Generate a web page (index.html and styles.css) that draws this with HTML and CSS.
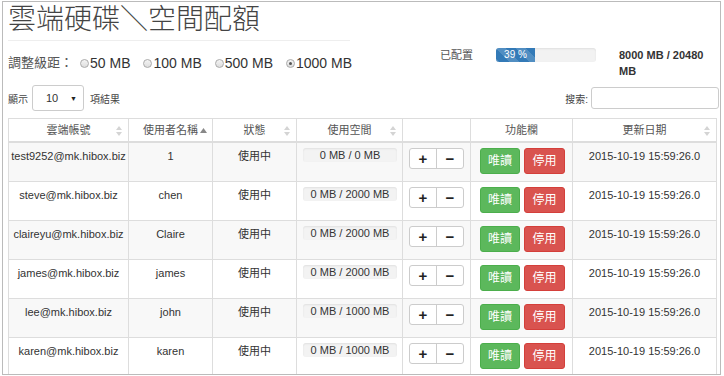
FILE: index.html
```html
<!DOCTYPE html>
<html>
<head>
    <meta charset="utf-8">
    <link rel="stylesheet" href="styles.css">
</head>
<body>
    <div class="frame">
        <div class="top">
            <div class="left">
                <h1 class="ptitle">雲端硬碟＼空間配額</h1>
                <div class="levels">
                    <span class="lbl">調整級距：</span>
                    <span class="opt"><span class="radio"></span>50 MB</span>
                    <span class="opt"><span class="radio"></span>100 MB</span>
                    <span class="opt"><span class="radio"></span>500 MB</span>
                    <span class="opt"><span class="radio checked"></span>1000 MB</span>
                </div>
            </div>
            <div class="quota">
                <span class="qlabel">已配置</span>
                <div class="qbar"><div class="qfill" style="width: 39%">39 %</div></div>
                <div class="qtext">8000 MB / 20480 MB</div>
            </div>
        </div>

        <div class="tools">
            <div class="length">
                顯示
                <div class="select"><span>10</span><span class="caret">▼</span></div>
                項結果
            </div>
            <div class="search">
                搜索:
                <div class="sinput"></div>
            </div>
        </div>

        <table class="grid">
            <colgroup>
                <col style="width: 120px">
                <col style="width: 84px">
                <col style="width: 84px">
                <col style="width: 106px">
                <col style="width: 68px">
                <col style="width: 102px">
                <col style="width: 144px">
            </colgroup>
            <thead>
                <tr>
                    <th>雲端帳號<svg class="sort" width="6" height="10" viewBox="0 0 6 10"><path d="M0 4L3 0L6 4Z M0 6L6 6L3 10Z"/></svg></th>
                    <th>使用者名稱<svg class="sort asc" width="7" height="5" viewBox="0 0 7 5"><path d="M0 5L3.5 0L7 5Z"/></svg></th>
                    <th>狀態<svg class="sort" width="6" height="10" viewBox="0 0 6 10"><path d="M0 4L3 0L6 4Z M0 6L6 6L3 10Z"/></svg></th>
                    <th>使用空間<svg class="sort" width="6" height="10" viewBox="0 0 6 10"><path d="M0 4L3 0L6 4Z M0 6L6 6L3 10Z"/></svg></th>
                    <th></th>
                    <th>功能欄</th>
                    <th>更新日期<svg class="sort" width="6" height="10" viewBox="0 0 6 10"><path d="M0 4L3 0L6 4Z M0 6L6 6L3 10Z"/></svg></th>
                </tr>
            </thead>
            <tbody id="rows"></tbody>
        </table>
    </div>

    <script>
        var users = [
            ["test9252@mk.hibox.biz", "1", "0 MB / 0 MB"],
            ["steve@mk.hibox.biz", "chen", "0 MB / 2000 MB"],
            ["claireyu@mk.hibox.biz", "Claire", "0 MB / 2000 MB"],
            ["james@mk.hibox.biz", "james", "0 MB / 2000 MB"],
            ["lee@mk.hibox.biz", "john", "0 MB / 1000 MB"],
            ["karen@mk.hibox.biz", "karen", "0 MB / 1000 MB"]
        ];

        var html = "";
        for (var i = 0; i < users.length; i++) {
            html += '<tr>' +
                '<td>' + users[i][0] + '</td>' +
                '<td>' + users[i][1] + '</td>' +
                '<td>使用中</td>' +
                '<td><div class="ubar">' + users[i][2] + '</div></td>' +
                '<td><div class="btngroup"><span class="pm">+</span><span class="pm">−</span></div></td>' +
                '<td class="acts"><span class="btn green">唯讀</span><span class="btn red">停用</span></td>' +
                '<td>2015-10-19 15:59:26.0</td>' +
                '</tr>';
        }
        document.getElementById('rows').innerHTML = html;
    </script>
</body>
</html>
```

FILE: styles.css
```css
*{
    margin: 0;
    padding: 0;
    box-sizing: border-box;
}
body {
    font-family: "Liberation Sans", "Noto Sans CJK TC", sans-serif;
    color: #333;
    background-color: #fff;
}

.frame {
    margin: 1px 3px 0 2px;
    height: 374px;
    border: 1px solid #bbb;
    padding: 0 3px 0 5px;
    overflow: hidden;
}

.top {
    display: flex;
}
.left {
    width: 432px;
}
.ptitle {
    width: 342px;
    padding-top: 2px;
    padding-bottom: 4px;
    font-size: 28px;
    line-height: 32px;
    font-weight: 300;
    color: #444;
    border-bottom: 1px solid #eee;
}

.levels {
    display: flex;
    align-items: center;
    margin-top: 12px;
    font-size: 14px;
    line-height: 20px;
    color: #333;
}
.lbl {
    font-size: 13px;
    color: #555;
    margin-right: 7px;
}
.opt {
    display: flex;
    align-items: center;
    margin-right: 13px;
}
.radio {
    width: 9px;
    height: 9px;
    border: 1px solid #aaa;
    border-radius: 50%;
    background: linear-gradient(#f4f4f4, #ddd);
    margin-right: 1px;
    position: relative;
}
.radio.checked::after {
    content: "";
    position: absolute;
    left: 2px;
    top: 2px;
    width: 3px;
    height: 3px;
    border-radius: 50%;
    background: #555;
}

.quota {
    display: flex;
    align-items: flex-start;
    padding-top: 45px;
    font-size: 11px;
    line-height: 16px;
}
.qlabel {
    width: 33px;
    margin-right: 23px;
    color: #555;
}
.qbar {
    width: 100px;
    height: 14px;
    margin-top: 1px;
    margin-right: 23px;
    background: #f2f2f2;
    border-radius: 3px;
    box-shadow: inset 0 1px 2px rgba(0,0,0,0.08);
    overflow: hidden;
}
.qfill {
    height: 100%;
    background-color: #337ab7;
    background-image: linear-gradient(45deg, rgba(255,255,255,.15) 25%, transparent 25%, transparent 50%, rgba(255,255,255,.15) 50%, rgba(255,255,255,.15) 75%, transparent 75%, transparent);
    background-size: 20px 20px;
    color: #fff;
    text-align: center;
    font-size: 10px;
    line-height: 14px;
}
.qtext {
    width: 92px;
    font-weight: bold;
    color: #333;
}

.tools {
    display: flex;
    justify-content: space-between;
    align-items: center;
    margin-top: 6px;
    font-size: 10px;
    color: #444;
}
.length {
    display: flex;
    align-items: center;
}
.select {
    display: flex;
    justify-content: space-between;
    align-items: center;
    width: 52px;
    height: 26px;
    margin: 0 6px 0 4px;
    padding: 0 6px 0 13px;
    border: 1px solid #ccc;
    border-radius: 3px;
    font-size: 11px;
    color: #333;
}
.caret {
    font-size: 7px;
    color: #222;
}
.search {
    display: flex;
    align-items: center;
    margin-right: -2px;
}
.sinput {
    width: 128px;
    height: 22px;
    margin-left: 3px;
    border: 1px solid #ccc;
    border-radius: 3px;
}

.grid {
    margin-top: 7px;
    width: 708px;
    table-layout: fixed;
    border-collapse: collapse;
    font-size: 11px;
}
.grid th {
    position: relative;
    padding: 4px 8px 3px;
    line-height: 15px;
    font-weight: normal;
    color: #555;
    text-align: center;
    border: 1px solid #ddd;
    border-bottom: 2px solid #ddd;
}
.sort {
    position: absolute;
    right: 6px;
    top: 7px;
    fill: #d4d4d4;
}
.sort.asc {
    right: 5px;
    top: 9px;
    fill: #888;
}
.grid td {
    padding: 5px 2px 7px;
    line-height: 16px;
    text-align: center;
    vertical-align: top;
    border: 1px solid #ddd;
    white-space: nowrap;
}
.grid tbody tr:nth-child(odd) {
    background-color: #f8f8f8;
}

.ubar {
    height: 14px;
    line-height: 14px;
    margin: 0 3px 0 4px;
    background: #f3f3f3;
    border-radius: 3px;
    box-shadow: inset 0 1px 2px rgba(0,0,0,0.08);
}

.btngroup {
    display: flex;
    width: 55px;
    height: 21px;
    margin-left: 4px;
    border: 1px solid #ccc;
    border-radius: 3px;
    background: #fff;
}
.pm {
    flex: 1;
    font-size: 15px;
    font-weight: bold;
    line-height: 19px;
    color: #222;
}
.pm + .pm {
    border-left: 1px solid #ccc;
}

.grid td.acts {
    padding-left: 9px;
    padding-right: 6px;
    text-align: left;
}
.btn {
    display: inline-block;
    width: 40px;
    height: 26px;
    line-height: 24px;
    font-size: 12px;
    color: #fff;
    text-align: center;
    border-radius: 3px;
    border: 1px solid;
    vertical-align: top;
}
.btn.green {
    background-color: #5cb85c;
    border-color: #4cae4c;
}
.btn.red {
    width: 41px;
    margin-left: 4px;
    background-color: #d9534f;
    border-color: #d43f3a;
}
```
